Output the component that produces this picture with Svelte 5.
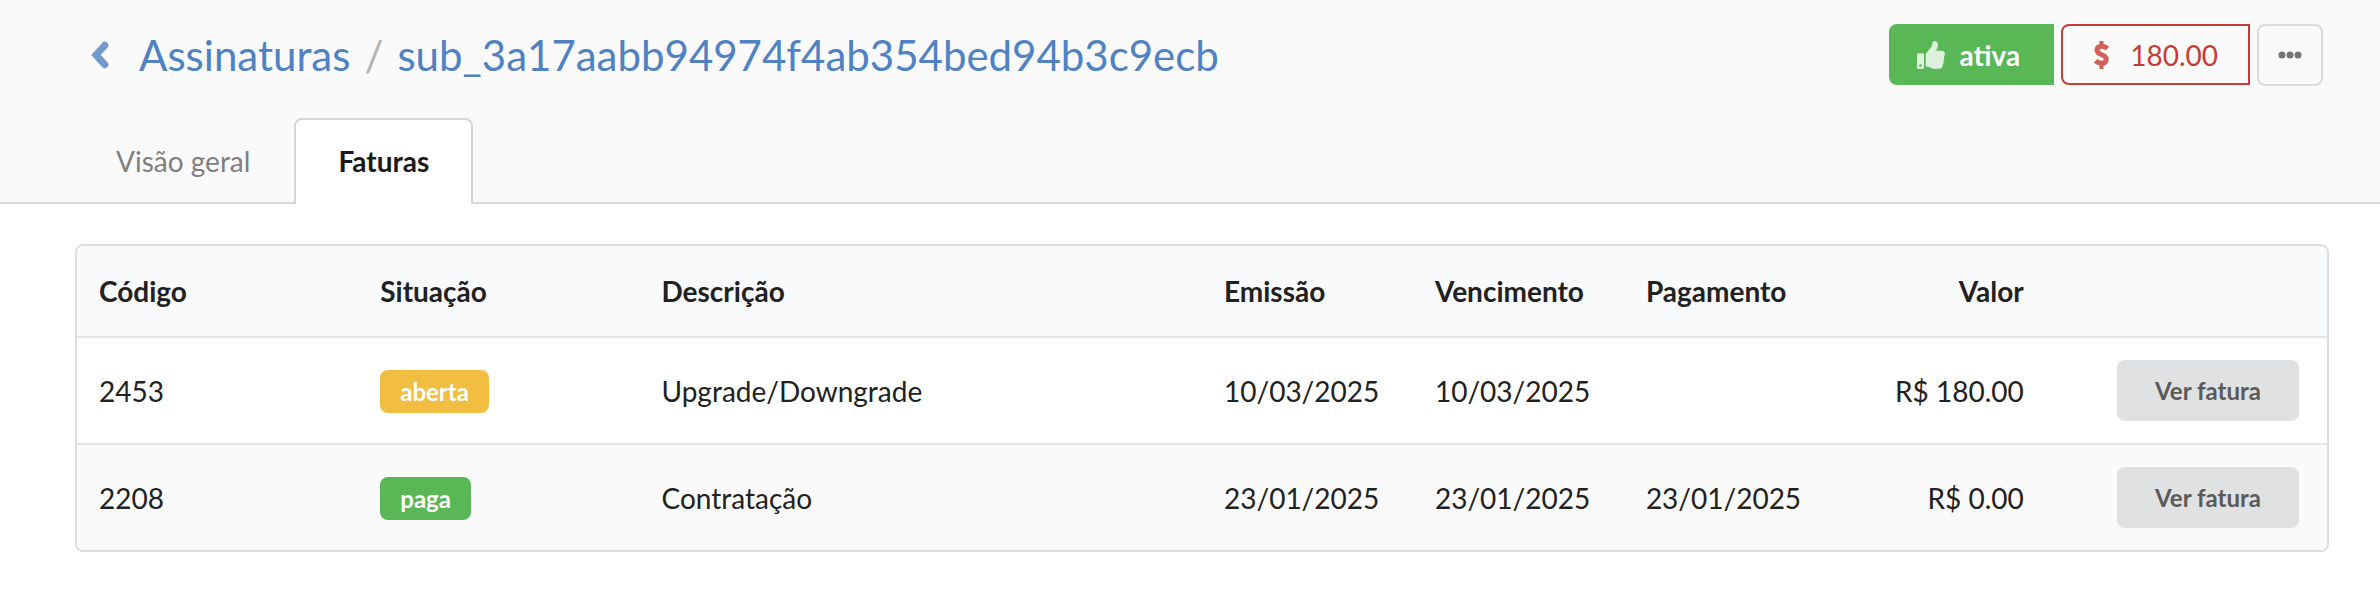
<script lang="ts">
  type Invoice = {
    code: string;
    status: 'aberta' | 'paga';
    description: string;
    issued: string;
    due: string;
    paid: string;
    amount: string;
  };

  const subscription = {
    id: 'sub_3a17aabb94974f4ab354bed94b3c9ecb',
    status: 'ativa',
    total: '180.00'
  };

  const tabs = [
    { label: 'Visão geral', href: '#visao-geral', active: false },
    { label: 'Faturas', href: '#faturas', active: true }
  ];

  // column widths, in 32nds of the table
  const columns = [4, 4, 8, 3, 3, 3, 3, 4];

  const invoices: Invoice[] = [
    {
      code: '2453',
      status: 'aberta',
      description: 'Upgrade/Downgrade',
      issued: '10/03/2025',
      due: '10/03/2025',
      paid: '',
      amount: '180.00'
    },
    {
      code: '2208',
      status: 'paga',
      description: 'Contratação',
      issued: '23/01/2025',
      due: '23/01/2025',
      paid: '23/01/2025',
      amount: '0.00'
    }
  ];
</script>

<header>
  <div class="top">
    <nav class="breadcrumb" aria-label="Navegação">
      <a class="back" href="#assinaturas" aria-label="Voltar">
        <svg viewBox="0 0 20 30" width="20" height="30" aria-hidden="true">
          <path d="M14.8 5.3L6 15l8.8 9.7" fill="none" stroke="currentColor" stroke-width="7" stroke-linecap="round" />
        </svg>
      </a>
      <a href="#assinaturas">Assinaturas</a>
      <span class="divider">/</span>
      <a href="#assinatura">{subscription.id}</a>
    </nav>

    <div class="actions">
      <button type="button" class="status">
        <svg class="icon" viewBox="0 0 512 512" width="28" height="28" aria-hidden="true">
          <path
            fill="currentColor"
            d="M104 224H24c-13.255 0-24 10.745-24 24v240c0 13.255 10.745 24 24 24h80c13.255 0 24-10.745 24-24V248c0-13.255-10.745-24-24-24zM64 472c-13.255 0-24-10.745-24-24s10.745-24 24-24 24 10.745 24 24-10.745 24-24 24zM384 81.452c0 42.416-25.97 66.208-33.277 94.548h101.723c33.397 0 59.397 27.746 59.553 58.098.084 17.938-7.546 37.249-19.439 49.197l-.11.11c9.836 23.337 8.237 56.037-9.308 79.469 8.681 25.895-.069 57.704-16.382 74.757 4.298 17.598 2.244 32.575-6.148 44.632C440.202 511.587 389.616 512 346.839 512l-2.845-.001c-48.287-.017-87.806-17.598-119.56-31.725-15.957-7.099-36.821-15.887-52.651-16.178-6.54-.12-11.783-5.457-11.783-11.998v-213.77c0-3.2 1.282-6.271 3.558-8.521 39.614-39.144 56.648-80.587 89.117-113.111 14.804-14.832 20.188-37.236 25.393-58.902C282.515 39.293 291.817 0 312 0c24 0 72 8 72 81.452z"
          />
        </svg>
        {subscription.status}
      </button>
      <button type="button" class="total">
        <svg class="icon" viewBox="0 0 15 28" width="15" height="28" aria-hidden="true">
          <path d="M7.5 0v4M7.5 23.500v4.500" fill="none" stroke="currentColor" stroke-width="4" />
          <path d="M13.500 7.500C10 4 3 4.500 3 9C3 15 12.300 12.500 12.300 18C12.300 23.500 5 23.300 1.500 19.800" fill="none" stroke="currentColor" stroke-width="5" />
        </svg>
        {subscription.total}
      </button>
      <button type="button" class="more" aria-label="Mais opções">
        <svg viewBox="0 0 24 8" width="24" height="8" aria-hidden="true">
          <circle cx="4" cy="4" r="3.500" />
          <circle cx="12" cy="4" r="3.500" />
          <circle cx="20" cy="4" r="3.500" />
        </svg>
      </button>
    </div>
  </div>

  <nav class="tabs" aria-label="Seções">
    {#each tabs as tab (tab.href)}
      <a class="tab" class:active={tab.active} href={tab.href}>{tab.label}</a>
    {/each}
  </nav>
</header>

<main>
  <div class="card">
    <table>
      <colgroup>
        {#each columns as span}
          <col style:width={`${(span / 32) * 100}%`} />
        {/each}
      </colgroup>
      <thead>
        <tr>
          <th>Código</th>
          <th>Situação</th>
          <th>Descrição</th>
          <th>Emissão</th>
          <th>Vencimento</th>
          <th>Pagamento</th>
          <th class="right">Valor</th>
          <th></th>
        </tr>
      </thead>
      <tbody>
        {#each invoices as invoice (invoice.code)}
          <tr>
            <td>{invoice.code}</td>
            <td><span class="label" class:paid={invoice.status === 'paga'}>{invoice.status}</span></td>
            <td>{invoice.description}</td>
            <td>{invoice.issued}</td>
            <td>{invoice.due}</td>
            <td>{invoice.paid}</td>
            <td class="right">R$ {invoice.amount}</td>
            <td class="right"><button type="button" class="view">Ver fatura</button></td>
          </tr>
        {/each}
      </tbody>
    </table>
  </div>
</main>

<style>
  :global(body) {
    margin: 0;
    background: #fff;
    color: #212121;
    font-family: Lato, "Liberation Sans", sans-serif;
    font-size: 28px;
    line-height: 40px;
  }

  a {
    color: #4f82c3;
    text-decoration: none;
  }

  button {
    font: inherit;
    cursor: pointer;
  }

  header {
    background: #fafafa;
    border-bottom: 2px solid #d9d9da;
  }

  .top {
    display: flex;
    justify-content: space-between;
    align-items: flex-start;
    padding: 24px 57px 0 90px;
  }

  .breadcrumb {
    display: flex;
    align-items: center;
    font-size: 42px;
    line-height: 62px;
  }

  .back {
    display: flex;
    margin-right: 29px;
    opacity: 0.8;
  }

  .divider {
    margin: 0 14px;
    color: #b3b3b3;
  }

  .actions {
    display: flex;
    gap: 7px;
  }

  .actions button {
    display: flex;
    align-items: center;
    box-sizing: border-box;
    height: 61px;
    border-radius: 8px;
  }

  .icon {
    opacity: 0.8;
  }

  .actions .status {
    gap: 15px;
    padding: 0 34px 0 28px;
    border: 0;
    border-radius: 8px 0 0 8px;
    background: #5ab756;
    color: #fff;
    font-weight: 700;
  }

  .actions .total {
    gap: 21px;
    padding: 0 30px 0 31px;
    border: 2px solid #c93a34;
    border-radius: 8px 0 0 8px;
    background: transparent;
    color: #c93a34;
  }

  .actions .more {
    justify-content: center;
    width: 66px;
    height: 62px;
    padding: 0;
    border: 2px solid #dcdcdc;
    background: transparent;
  }

  .more svg {
    fill: #757575;
  }

  .tabs {
    display: flex;
    padding: 32px 72px 0;
  }

  .tab {
    padding: 21px 42px;
    border: 2px solid transparent;
    border-bottom: 0;
    color: #7f7f7f;
  }

  /* the open tab covers the header's bottom border */
  .tab.active {
    margin-bottom: -2px;
    padding-bottom: 23px;
    border-color: #d4d4d5;
    border-radius: 8px 8px 0 0;
    background: #fff;
    color: #1a1a1a;
    font-weight: 700;
  }

  main {
    padding: 40px 51px 45px 75px;
  }

  .card {
    overflow: hidden;
    border: 2px solid #dddddd;
    border-radius: 8px;
  }

  table {
    width: 100%;
    table-layout: fixed;
    border-collapse: separate;
    border-spacing: 0;
  }

  th,
  td {
    padding: 22px;
    text-align: left;
    vertical-align: middle;
  }

  th {
    padding: 25px 22px;
    background: #f9fafc;
    font-weight: 700;
  }

  td {
    border-top: 2px solid #e4e4e5;
  }

  tbody tr:nth-child(even) {
    background: #fafafa;
  }

  .right {
    text-align: right;
  }

  .label {
    display: inline-block;
    padding: 0 20px;
    border-radius: 8px;
    background: #f2be42;
    color: #fff;
    font-size: 24px;
    line-height: 43px;
    font-weight: 700;
    vertical-align: middle;
  }

  .label.paid {
    background: #5ab756;
  }

  .view {
    display: inline-block;
    margin-right: 6px;
    padding: 0 38px;
    border: 0;
    border-radius: 8px;
    background: #e0e1e2;
    color: #5a5a5a;
    font-size: 24px;
    line-height: 61px;
    font-weight: 700;
    vertical-align: middle;
  }
</style>
